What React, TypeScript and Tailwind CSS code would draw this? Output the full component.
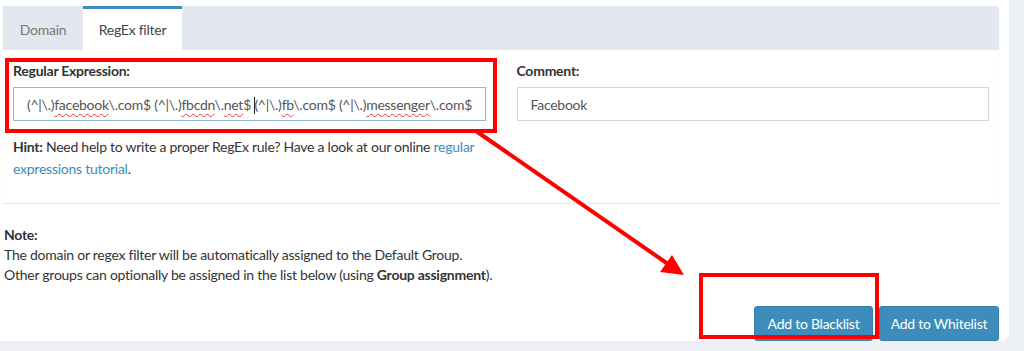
import { Fragment } from 'react';

const words: { t: string; bad?: boolean; caret?: boolean }[] = [
  { t: '(^|\\.)' },
  { t: 'facebook', bad: true },
  { t: '\\.com$ (^|\\.)' },
  { t: 'fbcdn', bad: true },
  { t: '\\.' },
  { t: 'net', bad: true },
  { t: '$ ' },
  { t: '(^|\\.)', caret: true },
  { t: 'fb', bad: true },
  { t: '\\.com$ (^|\\.)' },
  { t: 'messenger', bad: true },
  { t: '\\.com$' },
];

function Annotations() {
  return (
    <svg className="pointer-events-none absolute left-0 top-0" width="1024" height="351" viewBox="0 0 1024 351">
      <rect x="7" y="60" width="488" height="71" fill="none" stroke="#ff0000" strokeWidth="4" />
      <rect x="701" y="275" width="176" height="62" fill="none" stroke="#ff0000" strokeWidth="4" />
      <line x1="476" y1="131" x2="668" y2="264" stroke="#ff0000" strokeWidth="4" />
      <polygon points="684,275 660,272 672,255" fill="#ff0000" />
    </svg>
  );
}

export default function App() {
  return (
    <div className="relative min-h-[351px] bg-[#ecf0f5] font-['Lato',sans-serif] text-[14px] tracking-[-0.25px] text-[#333]">
      <div className="flex h-[341px] w-[1009px] flex-col rounded-br-[8px] bg-white pl-[3px] pt-[6px]">
        <div className="w-[996px] rounded-tr-[3px] bg-white shadow-[0_1px_1px_rgba(0,0,0,0.1)]">
          <div className="flex h-[44px] rounded-tr-[3px] bg-[#e3e7ef]">
            <div className="flex w-[80px] items-center justify-center pt-[3px] text-[#777]">Domain</div>
            <div className="flex w-[99px] items-center justify-center border-t-[3px] border-[#3c8dbc] bg-white text-[#444]">
              RegEx filter
            </div>
          </div>
          <div className="grid h-[153px] grid-cols-2 gap-[31px] px-[10px] pt-[11px]">
            <div>
              <div className="mb-[6px] font-bold leading-[20px]">Regular Expression:</div>
              <div className="flex h-[34px] items-center whitespace-pre border border-[#3c8dbc]/60 px-[13px] text-[#555]">
                <span>
                  {words.map((w, i) => (
                    <Fragment key={i}>
                      {w.caret && <span className="mr-[-1px] inline-block h-[17px] w-px bg-[#222] align-middle" />}
                      <span
                        className={
                          w.bad
                            ? 'underline decoration-[#e53935] decoration-wavy decoration-1 underline-offset-[3px]'
                            : ''
                        }
                      >
                        {w.t}
                      </span>
                    </Fragment>
                  ))}
                </span>
              </div>
              <p className="mt-[15px] text-[14px] leading-[22px]">
                <span className="whitespace-nowrap">
                  <b>Hint:</b> Need help to write a proper RegEx rule? Have a look at our online{' '}
                  <a className="text-[#3c8dbc]">regular</a>
                </span>
                <br />
                <a className="text-[#3c8dbc]">expressions tutorial</a>.
              </p>
            </div>
            <div>
              <div className="mb-[6px] font-bold leading-[20px]">Comment:</div>
              <div className="flex h-[34px] items-center border border-[#d2d6de] px-[13px] text-[#555]">Facebook</div>
            </div>
          </div>
        </div>
        <div className="mt-[22px] pl-px leading-[20px]">
          <b>Note:</b>
          <br />
          The domain or regex filter will be automatically assigned to the Default Group.
          <br />
          Other groups can optionally be assigned in the list below (using <b>Group assignment</b>).
        </div>
        <div className="mt-[21px] flex justify-end gap-[6px] pr-[10px]">
          <button className="h-[35px] w-[119px] rounded-[3px] border border-[#367fa9] bg-[#3c8dbc] text-white">
            Add to Blacklist
          </button>
          <button className="h-[35px] w-[120px] rounded-[3px] border border-[#367fa9] bg-[#3c8dbc] text-white">
            Add to Whitelist
          </button>
        </div>
      </div>
      <Annotations />
    </div>
  );
}
